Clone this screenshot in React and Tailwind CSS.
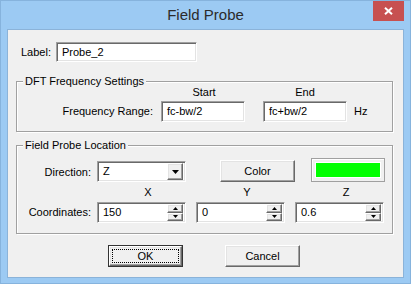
import { useState } from "react";

const sunken =
  "bg-white border border-t-[#a0a0a0] border-l-[#a0a0a0] border-r-white border-b-white shadow-[inset_1px_1px_0_#696969,inset_-1px_-1px_0_#e3e3e3]";
const raised =
  "bg-[#f0f0f0] border border-t-white border-l-white border-r-[#696969] border-b-[#696969] shadow-[inset_-1px_-1px_0_#a0a0a0,inset_1px_1px_0_#e3e3e3]";

function TextBox({ value, width }) {
  return (
    <div className={`${sunken} ${width} h-[21px] flex items-center pl-[5px]`}>
      <span>{value}</span>
    </div>
  );
}

function Arrow({ up, size = "small" }) {
  if (size === "big") {
    return (
      <svg width="7" height="4" viewBox="0 0 7 4">
        <path d="M0 0h7L3.5 4z" fill="#000" />
      </svg>
    );
  }
  return (
    <svg width="5" height="3" viewBox="0 0 5 3">
      <path d={up ? "M2.5 0L5 3H0z" : "M0 0h5L2.5 3z"} fill="#000" />
    </svg>
  );
}

function SpinBox({ value }) {
  return (
    <div className={`${sunken} w-[89px] h-[21px] flex items-center pl-[5px] pr-[2px]`}>
      <span className="flex-1">{value}</span>
      <div className="flex flex-col w-[16px] h-[17px]">
        <div className={`${raised} flex-1 flex items-center justify-center`}>
          <Arrow up />
        </div>
        <div className={`${raised} flex-1 flex items-center justify-center`}>
          <Arrow />
        </div>
      </div>
    </div>
  );
}

function GroupBox({ title, className, children }) {
  return (
    <div
      className={`relative w-[377px] border border-[#a0a0a0] shadow-[inset_1px_1px_0_#fff,1px_1px_0_#fff] ${className}`}
    >
      <span className="absolute left-[6px] top-[-8px] px-[2px] bg-[#f0f0f0] leading-[14px]">
        {title}
      </span>
      {children}
    </div>
  );
}

export default function App() {
  const [label, setLabel] = useState("Probe_2");

  return (
    <div
      className="w-[411px] h-[284px] bg-[#9ccaf3] border border-[#86b3dd] flex flex-col text-black"
      style={{ fontFamily: "'Liberation Sans', Arial, sans-serif" }}
    >
      {/* title bar */}
      <div className="h-[28px] grid grid-cols-[31px_1fr_31px] px-[6px]">
        <div />
        <div className="flex items-center justify-center text-[15px] text-[#2b2b2b] pt-[1px]">
          Field Probe
        </div>
        <div className="h-[20px] bg-[#c75050] flex items-center justify-center">
          <svg width="9" height="8" viewBox="0 0 9 8">
            <path d="M1 0.8L8 7.2M8 0.8L1 7.2" stroke="#fff" strokeWidth="2" />
          </svg>
        </div>
      </div>

      {/* client area */}
      <div className="mx-[6px] h-[249px] border border-[#8bb3d9] bg-[#f0f0f0] text-[11px] flex flex-col px-[8px]">
        <div className="mt-[12px] flex items-center">
          <span className="ml-[5px]">Label:</span>
          <div className={`${sunken} ml-[5px] w-[141px] h-[20px] flex items-center pl-[5px]`}>
            <input
              value={label}
              onChange={(e) => setLabel(e.target.value)}
              className="w-full outline-none bg-transparent"
            />
          </div>
        </div>

        <GroupBox title="DFT Frequency Settings" className="mt-[19px] h-[51px]">
          <div className="flex mt-[4px] leading-[13px]">
            <div className="w-[144px]" />
            <div className="w-[84px] text-center pl-[2px]">Start</div>
            <div className="w-[18px]" />
            <div className="w-[84px] text-center">End</div>
          </div>
          <div className="flex items-center mt-[2px]">
            <div className="w-[136px] text-right">Frequency Range:</div>
            <div className="ml-[8px]">
              <TextBox value="fc-bw/2" width="w-[84px]" />
            </div>
            <div className="ml-[18px]">
              <TextBox value="fc+bw/2" width="w-[84px]" />
            </div>
            <span className="ml-[7px]">Hz</span>
          </div>
        </GroupBox>

        <GroupBox title="Field Probe Location" className="mt-[13px] h-[89px]">
          <div className="flex items-end mt-[12px] h-[24px]">
            <div className="w-[74px] text-right self-center pt-[4px]">Direction:</div>
            <div className={`${sunken} ml-[6px] w-[89px] h-[21px] flex items-center pl-[5px] pr-[2px]`}>
              <span className="flex-1">Z</span>
              <div className={`${raised} w-[16px] h-[17px] flex items-center justify-center`}>
                <Arrow size="big" />
              </div>
            </div>
            <button className={`${raised} ml-[34px] w-[75px] h-[22px] text-[11px]`}>Color</button>
            <div className="ml-[16px] w-[74px] h-[24px] border border-[#a0a0a0] bg-[#f0f0f0] p-[3px] shadow-[inset_1px_1px_0_#fff]">
              <div className="w-full h-full bg-[#00ff00] border border-white" />
            </div>
          </div>
          <div className="flex mt-[4px] leading-[13px]">
            <div className="w-[80px]" />
            <div className="w-[89px] text-center pl-[13px]">X</div>
            <div className="w-[10px]" />
            <div className="w-[89px] text-center pl-[13px]">Y</div>
            <div className="w-[10px]" />
            <div className="w-[89px] text-center pl-[13px]">Z</div>
          </div>
          <div className="flex items-center mt-[3px]">
            <div className="w-[74px] text-right">Coordinates:</div>
            <div className="ml-[6px]">
              <SpinBox value="150" />
            </div>
            <div className="ml-[10px]">
              <SpinBox value="0" />
            </div>
            <div className="ml-[10px]">
              <SpinBox value="0.6" />
            </div>
          </div>
        </GroupBox>

        <div className="flex justify-center gap-[42px] mt-[11px] pr-[3px]">
          <button className="w-[75px] h-[22px] border border-[#333] p-0">
            <div className={`${raised} w-full h-full flex items-center justify-center p-[2px]`}>
              <div className="w-full h-full border border-dotted border-black flex items-center justify-center">
                OK
              </div>
            </div>
          </button>
          <button className={`${raised} w-[75px] h-[22px]`}>Cancel</button>
        </div>
      </div>
    </div>
  );
}
